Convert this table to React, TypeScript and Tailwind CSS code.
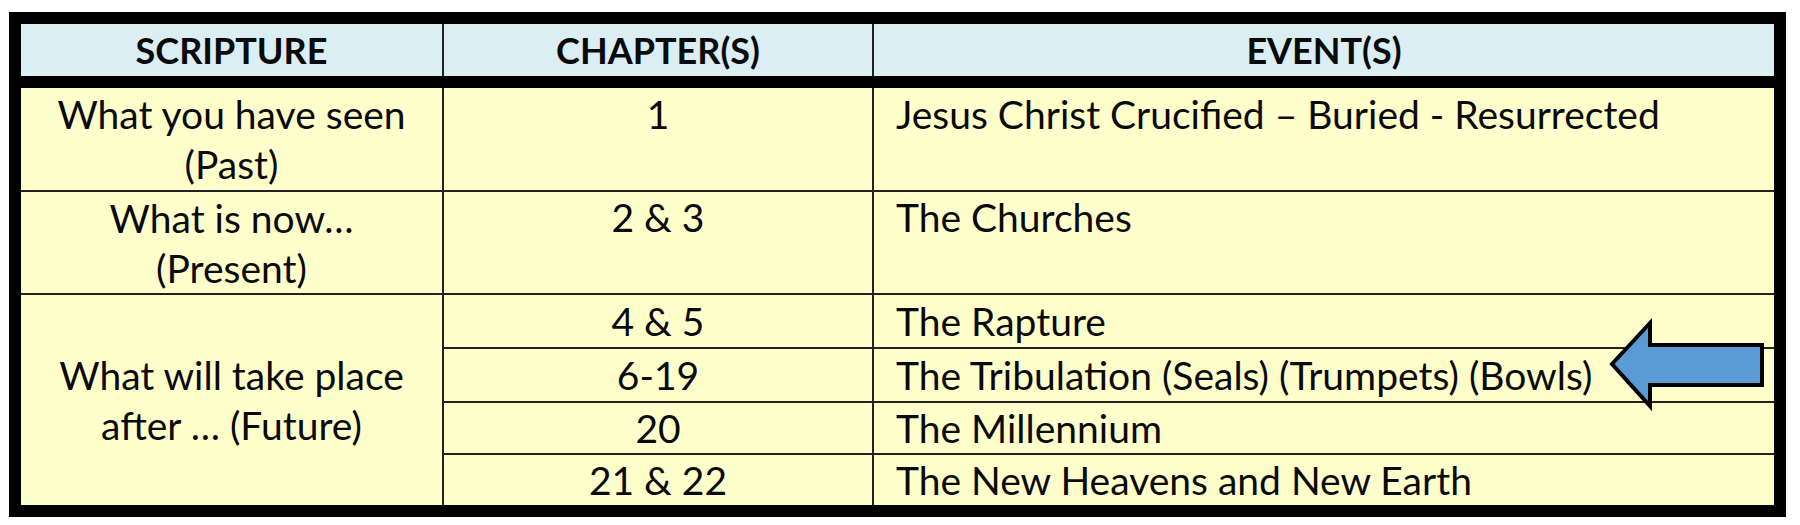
import React from 'react';

const font = { fontFamily: 'Lato, "Open Sans", sans-serif' };

const subRows = [
  { ch: '4 & 5', ev: 'The Rapture' },
  { ch: '6-19', ev: 'The Tribulation (Seals) (Trumpets) (Bowls)' },
  { ch: '20', ev: 'The Millennium' },
  { ch: '21 & 22', ev: 'The New Heavens and New Earth' },
];

function Arrow() {
  return (
    <svg
      className="absolute left-[1591px] top-[313px]"
      width="175"
      height="105"
      viewBox="0 0 175 105"
    >
      <polygon
        points="12,51 50,10 50,32 162,32 162,72 50,72 50,93"
        fill="#5b9bd5"
        stroke="#000"
        strokeWidth="4"
        strokeLinejoin="miter"
      />
    </svg>
  );
}

export default function App() {
  return (
    <div className="w-[1800px] h-[525px] bg-white text-[#0a0a0a]" style={font}>
      <div className="relative ml-[9px] pt-[12px]">
        <div className="w-[1777px] bg-black p-[12px]">
          {/* Header */}
          <div className="grid grid-cols-[421px_430px_902px] h-[52px] bg-[#daeef3] text-[36px] font-bold leading-[52px] text-center">
            <div>SCRIPTURE</div>
            <div className="border-l-2 border-[#222]">CHAPTER(S)</div>
            <div className="border-l-2 border-[#222]">EVENT(S)</div>
          </div>

          {/* Body */}
          <div className="mt-[12px] grid grid-cols-[421px_430px_902px] grid-rows-[102px_103px_54px_54px_52px_52px] bg-[#ffffcc] text-[39px] leading-[50px]">
            {/* Row 1 */}
            <div className="flex flex-col justify-center items-center">
              <span>What you have seen</span>
              <span>(Past)</span>
            </div>
            <div className="border-l-2 border-[#222] pt-[1px] text-center">1</div>
            <div className="border-l-2 border-[#222] pt-[1px] pl-[22px]">Jesus Christ Crucified – Buried - Resurrected</div>

            {/* Row 2 */}
            <div className="border-t-2 border-[#222] flex flex-col justify-center items-center">
              <span>What is now…</span>
              <span>(Present)</span>
            </div>
            <div className="border-t-2 border-l-2 border-[#222] text-center">2 &amp; 3</div>
            <div className="border-t-2 border-l-2 border-[#222] pl-[22px]">The Churches</div>

            {/* Row 3 */}
            <div className="row-span-4 border-t-2 border-[#222] flex flex-col justify-center items-center">
              <span>What will take place</span>
              <span>after … (Future)</span>
            </div>
            {subRows.map((r) => (
              <React.Fragment key={r.ch}>
                <div className="border-t-2 border-l-2 border-[#222] flex items-center justify-center">{r.ch}</div>
                <div className="border-t-2 border-l-2 border-[#222] flex items-center pl-[22px]">{r.ev}</div>
              </React.Fragment>
            ))}
          </div>
        </div>
        <Arrow />
      </div>
    </div>
  );
}
